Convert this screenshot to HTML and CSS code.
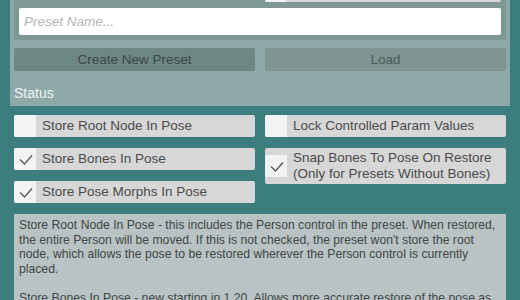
FILE: index.html
```html
<!DOCTYPE html>
<html lang="en">
<head>
  <title>Pose Presets</title>
  <link rel="stylesheet" href="styles.css">
</head>
<body>

  <div class="panel">
    <div class="name-box">
      <div class="top-row">
        <div></div>
        <div class="toggle">
          <span class="box"></span>
          <span class="text"></span>
        </div>
      </div>
      <input type="text" class="name-input" placeholder="Preset Name..." />
    </div>

    <div class="btn-row">
      <button class="btn btn-create">Create New Preset</button>
      <button class="btn btn-load">Load</button>
    </div>

    <div class="status">Status</div>
  </div>

  <div class="options">
    <div class="col">
      <div class="toggle">
        <span class="box"></span>
        <span class="text">Store Root Node In Pose</span>
      </div>
      <div class="toggle">
        <span class="box"><svg width="22" height="22" viewBox="0 0 22 22"><polyline points="6,11.5 10.5,16 18,7.5" /></svg></span>
        <span class="text">Store Bones In Pose</span>
      </div>
      <div class="toggle">
        <span class="box"><svg width="22" height="22" viewBox="0 0 22 22"><polyline points="6,11.5 10.5,16 18,7.5" /></svg></span>
        <span class="text">Store Pose Morphs In Pose</span>
      </div>
    </div>
    <div class="col">
      <div class="toggle">
        <span class="box"></span>
        <span class="text">Lock Controlled Param Values</span>
      </div>
      <div class="toggle tall">
        <span class="box"><svg width="22" height="22" viewBox="0 0 22 22"><polyline points="6,11.5 10.5,16 18,7.5" /></svg></span>
        <span class="text">Snap Bones To Pose On Restore<br>(Only for Presets Without Bones)</span>
      </div>
    </div>
  </div>

  <div class="help">
    <p>Store Root Node In Pose - this includes the Person control in the preset. When restored, the entire Person will be moved. If this is not checked, the preset won't store the root node, which allows the pose to be restored wherever the Person control is currently placed.</p>
    <p>Store Bones In Pose - new starting in 1.20. Allows more accurate restore of the pose as</p>
  </div>

</body>
</html>
```

FILE: styles.css
```css
body {
  margin: 0;
  background: #3b7e7d;
  font-family: "Liberation Sans", Arial, sans-serif;
  overflow: hidden;
}

.panel {
  margin: -29px 0 0 10px;
  width: 500px;
  box-sizing: border-box;
  padding: 4px 4px 5px 4px;
  background: #8fa9a8;
}

.name-box {
  background: #7f9795;
  padding: 5px;
  display: flex;
  flex-direction: column;
  gap: 6px;
}

.top-row {
  display: grid;
  grid-template-columns: 1fr 1fr;
  column-gap: 10px;
}

.name-input {
  height: 27px;
  box-sizing: border-box;
  border: none;
  border-radius: 2px;
  background: #fff;
  padding: 0 5px;
  font-family: inherit;
  font-size: 13.5px;
  font-style: italic;
  outline: none;
}

.name-input::placeholder {
  color: #b4b4b4;
}

.btn-row {
  display: grid;
  grid-template-columns: 1fr 1fr;
  column-gap: 10px;
  margin-top: 8px;
}

.btn {
  height: 23px;
  border: none;
  border-radius: 2px;
  font-family: inherit;
  font-size: 13.5px;
  padding: 0;
}

.btn-create {
  background: #6f8784;
  color: #3a4847;
}

.btn-load {
  background: #7e9592;
  color: #4b5a58;
}

.status {
  margin-top: 14px;
  font-size: 14px;
  line-height: 16px;
  color: #eef3f3;
}

.options {
  display: grid;
  grid-template-columns: 1fr 1fr;
  column-gap: 10px;
  margin: 9px 14px 0 14px;
}

.col {
  display: flex;
  flex-direction: column;
  gap: 11px;
}

.toggle {
  display: flex;
  align-items: center;
  background: #d7d7d7;
  border-radius: 2px;
  min-height: 22px;
}

.toggle.tall {
  min-height: 36px;
}

.toggle .box {
  width: 22px;
  height: 22px;
  flex: none;
  background: #f3f3f3;
  border-radius: 2px 0 0 2px;
}

.toggle .box svg {
  display: block;
  fill: none;
  stroke: #5a5a5a;
  stroke-width: 1.4;
}

.toggle .text {
  padding-left: 6px;
  font-size: 13.5px;
  line-height: 16px;
  color: #4a4a4a;
}

.help {
  margin: 11px 14px 0 14px;
  background: #b9c3c3;
  padding: 4px 5px;
  font-size: 12.2px;
  line-height: 14.5px;
  color: #3e4646;
}

.help p {
  margin: 0 0 14.5px 0;
}
```
